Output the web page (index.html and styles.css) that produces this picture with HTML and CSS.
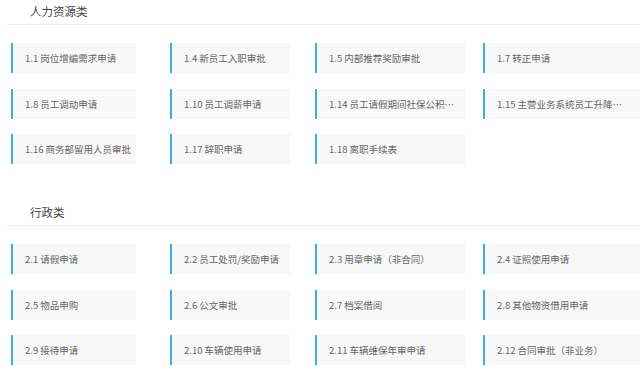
FILE: index.html
```html
<!DOCTYPE html>
<html>
	<head>
		<meta charset="utf-8">
		<title>流程申请</title>
		<link rel="stylesheet" href="styles.css">
	</head>
	<body>
		<div class="page">
			<div class="group">
				<div class="group-title">人力资源类</div>
				<div class="list">
					<div class="item">1.1 岗位增编需求申请</div>
					<div class="item">1.4 新员工入职审批</div>
					<div class="item">1.5 内部推荐奖励审批</div>
					<div class="item">1.7 转正申请</div>
					<div class="item">1.8 员工调动申请</div>
					<div class="item">1.10 员工调薪申请</div>
					<div class="item">1.14 员工请假期间社保公积金缴纳申请</div>
					<div class="item">1.15 主营业务系统员工升降级申请</div>
					<div class="item">1.16 商务部留用人员审批</div>
					<div class="item">1.17 辞职申请</div>
					<div class="item">1.18 离职手续表</div>
				</div>
			</div>
			<div class="group">
				<div class="group-title">行政类</div>
				<div class="list">
					<div class="item">2.1 请假申请</div>
					<div class="item">2.2 员工处罚/奖励申请</div>
					<div class="item">2.3 用章申请（非合同）</div>
					<div class="item">2.4 证照使用申请</div>
					<div class="item">2.5 物品申购</div>
					<div class="item">2.6 公文审批</div>
					<div class="item">2.7 档案借阅</div>
					<div class="item">2.8 其他物资借用申请</div>
					<div class="item">2.9 接待申请</div>
					<div class="item">2.10 车辆使用申请</div>
					<div class="item">2.11 车辆维保年审申请</div>
					<div class="item">2.12 合同审批（非业务）</div>
				</div>
			</div>
		</div>
	</body>
</html>
```

FILE: styles.css
```css
* {
	margin: 0;
	padding: 0;
	box-sizing: border-box;
}

body {
	background-color: #fff;
	font-family: "Microsoft YaHei", "Noto Sans CJK SC", "Noto Sans", sans-serif;
	color: #666;
}

.page {
	padding-left: 7px;
}

.group + .group {
	margin-top: 37px;
}

.group-title {
	height: 25px;
	line-height: 22px;
	padding-left: 23px;
	font-size: 11.5px;
	color: #444;
	border-bottom: 1px solid #eee;
}

.list {
	display: grid;
	grid-template-columns: 159px 145px 168px 1fr;
	grid-auto-rows: 30px;
	row-gap: 15.5px;
	margin-top: 18px;
	padding-left: 4px;
}

.item {
	height: 30px;
	line-height: 30px;
	padding: 0 2px 0 12px;
	font-size: 9.5px;
	background-color: #f8f8f9;
	border-left: 2px solid #3aaee2;
	white-space: nowrap;
	overflow: hidden;
	text-overflow: ellipsis;
}

/* 每列卡片宽度不一样 */
.item:nth-child(4n+1) {
	width: 125px;
}

.item:nth-child(4n+2) {
	width: 120px;
}

.item:nth-child(4n+3) {
	width: 150px;
}

.item:nth-child(4n) {
	width: 100%;
	padding-right: 10px;
}
```
